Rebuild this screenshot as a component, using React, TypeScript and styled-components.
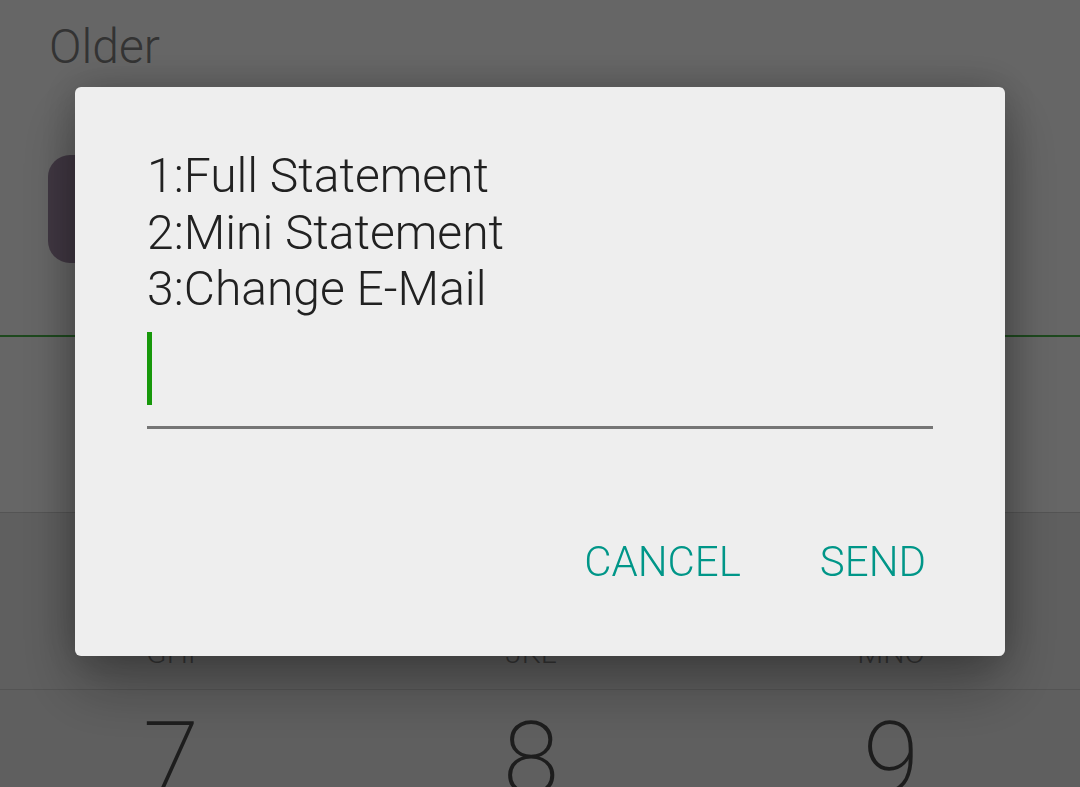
import styled, { createGlobalStyle } from 'styled-components';

const GlobalStyle = createGlobalStyle`
  html, body {
    margin: 0;
    padding: 0;
    overflow: hidden;
    background: #ffffff;
    font-family: Roboto, "Noto Sans", "Liberation Sans", sans-serif;
  }
`;

const keys = [
  [
    { digit: '4', letters: 'GHI' },
    { digit: '5', letters: 'JKL' },
    { digit: '6', letters: 'MNO' },
  ],
  [
    { digit: '7', letters: 'PQRS' },
    { digit: '8', letters: 'TUV' },
    { digit: '9', letters: 'WXYZ' },
  ],
];

const menu = ['1:Full Statement', '2:Mini Statement', '3:Change E-Mail'];

const App = () => {
  return (
    <>
      <GlobalStyle />
      <Dialer>
        <SectionTitle>Older</SectionTitle>
        <ContactRow>
          <Avatar />
        </ContactRow>
        <AccentDivider />
        <DigitsField />
        <Keypad>
          {keys.map((row, i) => (
            <KeyRow key={i}>
              {row.map((k) => (
                <Key key={k.digit}>
                  <Digit>{k.digit}</Digit>
                  <Letters>{k.letters}</Letters>
                </Key>
              ))}
            </KeyRow>
          ))}
        </Keypad>
      </Dialer>

      <Scrim>
        <Dialog>
          <Message>
            {menu.map((line) => (
              <div key={line}>{line}</div>
            ))}
          </Message>
          <InputField>
            <Cursor />
          </InputField>
          <Actions>
            <ActionButton>Cancel</ActionButton>
            <ActionButton>Send</ActionButton>
          </Actions>
        </Dialog>
      </Scrim>
    </>
  );
};

export default App;

const Dialer = styled.div`
  height: 100vh;
  overflow: hidden;
  display: flex;
  flex-direction: column;
  background: #ffffff;

  > * {
    flex-shrink: 0;
  }
`;

const SectionTitle = styled.div`
  padding: 19px 50px 0 49px;
  height: 56px;
  font-size: 48px;
  line-height: 56px;
  font-weight: 300;
  color: #808080;
`;

const ContactRow = styled.div`
  display: flex;
  align-items: center;
  margin-top: 80px;
  padding-left: 48px;
  height: 108px;
`;

const Avatar = styled.div`
  width: 108px;
  height: 108px;
  border-radius: 22px;
  background: #a28ba7;
`;

const AccentDivider = styled.div`
  margin-top: 72px;
  height: 2px;
  background: #4bb74c;
`;

const DigitsField = styled.div`
  height: 175px;
`;

const Keypad = styled.div`
  background: #ededed;
`;

const KeyRow = styled.div`
  display: grid;
  grid-template-columns: repeat(3, 1fr);
  height: 176px;
  border-top: 1px solid #d2d2d2;
`;

const Key = styled.div`
  display: flex;
  flex-direction: column;
  align-items: center;
  padding: 19px 18px 0 0;
`;

const Digit = styled.div`
  font-size: 102px;
  line-height: 100px;
  font-weight: 200;
  color: #4a4a4a;
`;

const Letters = styled.div`
  margin-top: 6px;
  font-size: 30px;
  line-height: 30px;
  font-weight: 300;
  color: #8a8a8a;
`;

const Scrim = styled.div`
  position: fixed;
  inset: 0;
  background: rgba(0, 0, 0, 0.6);
  display: flex;
  justify-content: center;
  align-items: flex-start;
  padding-top: 87px;
`;

const Dialog = styled.div`
  width: 930px;
  box-sizing: border-box;
  padding: 61px 72px 73px;
  background: #eeeeee;
  border-radius: 6px;
  box-shadow: 0 30px 60px rgba(0, 0, 0, 0.3), 0 0 40px rgba(0, 0, 0, 0.22);
`;

const Message = styled.div`
  font-size: 48px;
  line-height: 56.5px;
  font-weight: 300;
  color: #212121;
`;

const InputField = styled.div`
  margin-top: 14.5px;
  padding-bottom: 21px;
  border-bottom: 3px solid #757575;
`;

const Cursor = styled.div`
  width: 5px;
  height: 73px;
  background: #17980a;
`;

const Actions = styled.div`
  display: flex;
  justify-content: flex-end;
  gap: 79px;
  margin-top: 111.7px;
  padding-right: 7px;
`;

const ActionButton = styled.button`
  border: none;
  background: none;
  padding: 0;
  font-family: inherit;
  font-size: 42px;
  line-height: 42px;
  font-weight: 300;
  text-transform: uppercase;
  color: #009688;
  cursor: pointer;
`;
